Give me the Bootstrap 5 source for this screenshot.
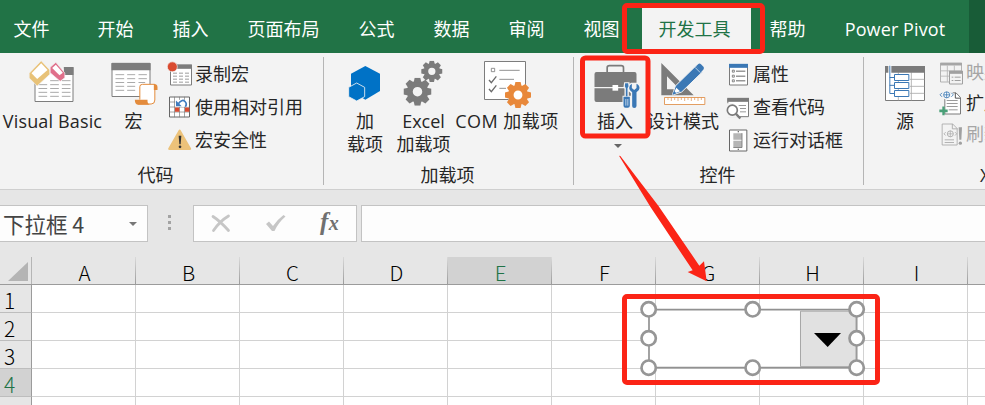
<!DOCTYPE html>
<html lang="zh-CN">
<head>
<meta charset="utf-8">
<meta name="viewport" content="width=device-width, initial-scale=1">
<title>Excel</title>
<link href="https://cdn.jsdelivr.net/npm/bootstrap@5.3.0/dist/css/bootstrap.min.css" rel="stylesheet">
<style>
body{width:985px;height:405px;overflow:hidden;background:#e6e6e6;font-family:"Open Sans","Noto Sans CJK SC",sans-serif;font-size:18px;line-height:23px;color:#262626}
.cjk{font-family:"Noto Sans CJK SC",sans-serif}
svg{overflow:visible;flex:none;display:block}
.tabs{height:53px;background:#217346;color:#fff;padding-top:8px}
.tabs .tab{height:45px;width:75px;padding:0 2px 2px 0;white-space:nowrap}
.tabs .tab-file{width:65px;margin-right:14px}
.tabs .tab-wide{width:111px}
.tabs .tab-on{width:109px;margin-left:2px;padding-right:4px;background:#f3f3f3;color:#217346}
.tabs .tab-pp{width:140px;letter-spacing:.1px}
.tabs .tab-end{width:16px;height:53px;margin:-8px 0 0 auto;background:#185c37}
.ribbon{height:137px;background:#f3f3f3;border-bottom:1px solid #cfcfcf;padding-top:4px}
.grp{height:128px;border-right:1px solid #b5b5b5;flex:none}
.grp-body{height:106px}
.grp-name{height:22px;white-space:nowrap;line-height:24px}
.g1{width:324px}.g2{width:250px}.g3{width:290px}.g4{width:160px;border:0}
.g1 .grp-name{padding-right:12px}
.g2 .grp-body{padding-left:13px}
.g2 .grp-name,.g3 .grp-name{padding-right:2px}
.g4 .grp-name{padding-left:116px}
.big{padding-top:3px;text-align:center;white-space:nowrap;flex:none}
.big svg{width:48px;height:48px;margin-bottom:2px}
.big .caret{width:8px;height:4px;margin:11px 0 0 5px}
.w105{width:105px}.w57{width:57px}.w56{width:56px}.w61{width:61px}.w106{width:106px}.w54{width:54px}.w82{width:82px}
.com-label{letter-spacing:.45px}
.vb-label{letter-spacing:.15px}
.tools{padding-top:1px}
.g1 .tools{margin-left:6px}
.g3 .tools{margin-left:17px}
.tool{height:33px;gap:2px;white-space:nowrap}
.g1 .tool{gap:3px}
.tool svg{width:24px;height:24px}
.g4 .tools{padding-top:0;margin-left:-7px}.g4 .tool{height:31px;gap:3px}
.off{color:#a6a6a6}
.fbar{height:37px;margin-top:15px}
.fbox{height:37px;background:#fdfdfd;border:1px solid #c3c3c3}
.namebox{width:148px;border-left:0;font-size:21.5px;padding:0 10px 0 3px;color:#444}
.grip{margin-left:20px}
.keys{width:164px;margin-left:22px}
.key-x{margin-left:18px}
.key-ok{margin-left:36px}
.fx{font:italic bold 25px/30px "Liberation Serif",serif;color:#707070;margin:0 0 3px 34px;letter-spacing:.5px}
.fx small{font-size:20px}
.entry{margin-left:4px}
.sheet{margin-top:15px;height:148px;font-family:"Noto Sans CJK SC",sans-serif;font-weight:300;font-size:20.5px;color:#000}
.hrow{height:28px;border-bottom:1px solid #9b9b9b}
.corner{width:32px;height:27px;border-right:1px solid #b5b5b5;padding:5px 3px 3px 8px}
.ch{width:104px;height:27px;flex:none;padding:3px 0 0 2px;border-right:1px solid;border-image:linear-gradient(#dcdcdc,#999) 1}
.sel{background:#d2d2d2;color:#217346}
.rh{width:32px;height:28px;padding:3px 0 0 4px;font-size:21px;border-right:1px solid #9b9b9b;border-bottom:1px solid #bdbdbd;flex:none}
.cell{width:104px;height:28px;flex:none;background:#fff;border-right:1px solid #d2d2d2;border-bottom:1px solid #d2d2d2}
.over{left:0;top:0;pointer-events:none}
</style>
<script src="https://cdn.jsdelivr.net/npm/bootstrap@5.3.0/dist/js/bootstrap.bundle.min.js"></script>
</head>
<body class="position-relative">
<svg width="0" height="0" class="position-absolute"><defs>
<g id="tooth"><path d="M-14-33-10-50H10L14-33Z"/></g>
<symbol id="gear" viewBox="-50 -50 100 100"><g fill="currentColor"><circle r="27.500" fill="none" stroke="currentColor" stroke-width="21"/><use href="#tooth"/><use href="#tooth" transform="rotate(45)"/><use href="#tooth" transform="rotate(90)"/><use href="#tooth" transform="rotate(135)"/><use href="#tooth" transform="rotate(180)"/><use href="#tooth" transform="rotate(225)"/><use href="#tooth" transform="rotate(270)"/><use href="#tooth" transform="rotate(315)"/></g></symbol>
</defs></svg>

<nav class="tabs d-flex">
<div class="tab tab-file d-flex align-items-center justify-content-center">文件</div>
<div class="tab d-flex align-items-center justify-content-center">开始</div>
<div class="tab d-flex align-items-center justify-content-center">插入</div>
<div class="tab tab-wide d-flex align-items-center justify-content-center">页面布局</div>
<div class="tab d-flex align-items-center justify-content-center">公式</div>
<div class="tab d-flex align-items-center justify-content-center">数据</div>
<div class="tab d-flex align-items-center justify-content-center">审阅</div>
<div class="tab d-flex align-items-center justify-content-center">视图</div>
<div class="tab tab-on d-flex align-items-center justify-content-center">开发工具</div>
<div class="tab d-flex align-items-center justify-content-center">帮助</div>
<div class="tab tab-pp d-flex align-items-center justify-content-center">Power Pivot</div>
<div class="tab-end"></div>
</nav>

<section class="ribbon d-flex overflow-hidden">
<div class="grp g1">
 <div class="grp-body d-flex">
  <div class="big w105 d-flex flex-column align-items-center">
   <svg viewBox="85.500 30 144 144"><path d="M103.500 68V154.500H217.500V52" fill="#fff" stroke="#7d7d7d" stroke-width="3"/><path d="M190 51h29v24h-29z" fill="#7d7d7d"/><path d="M114 104h26M149 104h26M184 104h26M114 115.500h26M149 115.500h26M184 115.500h26M114 127h26M149 127h26M184 127h26M114 139h26M149 139h26M184 139h26M149 92h26M184 92h26" stroke="#999" stroke-width="2.500"/><path d="M122 32 148 60V73L110 108 86 84V70Z" fill="#e8c278" stroke="#f3f3f3" stroke-width="2"/><path d="M122 40 141 60 110 87 93 70Z" fill="#fff"/><path d="M166 37 193 69V83L179 94 149 68V52Z" fill="#e0708b" stroke="#f3f3f3" stroke-width="2"/><path d="M166 44 187 68 177 76 155 54Z" fill="#fff"/></svg>
   <div class="vb-label">Visual Basic</div></div>
  <div class="big w57 d-flex flex-column align-items-center">
   <svg viewBox="328.500 30 144 144"><path d="M334.500 40V139.500H448.500V40Z" fill="#fff" stroke="#7d7d7d" stroke-width="3"/><path d="M333 39h117v22H333z" fill="#7d7d7d"/><path d="M345 74h26M380 74h24M414 74h25M345 86h26M380 86h24M414 86h25M345 97.500h26M380 97.500h24M414 97.500h20M345 109h26M380 109h24M345 121h26M380 121h24" stroke="#999" stroke-width="2.500"/><path d="M418 149V110Q418 103 426 103H463V150Q463 162 452 162H412" fill="#fff" stroke="#e38b3c" stroke-width="3"/><path d="M460 102Q471 102 471 112V120H460ZM403 149H441Q440 161 448 164H414Q403 164 403 149Z" fill="#e38b3c"/></svg>
   <div>宏</div></div>
  <div class="tools">
   <div class="tool d-flex align-items-center"><svg viewBox="24 37.500 72 72"><path d="M31.500 44H94.500V103.500H31.500Z" fill="#fff" stroke="#7d7d7d" stroke-width="3"/><path d="M50 42h46v13H50z" fill="#7d7d7d"/><path d="M39 68h12M57 68h12M75 68h12M39 77h12M57 77h12M75 77h12M39 86h12M57 86h12M75 86h12M39 95h12M57 95h12M75 95h12" stroke="#888" stroke-width="2.500"/><circle cx="37" cy="49" r="15" fill="#da4b30" stroke="#f3f3f3" stroke-width="2"/></svg><span>录制宏</span></div>
   <div class="tool d-flex align-items-center"><svg viewBox="24 136.500 72 72"><path d="M28.500 139.500H88.500V199.500H28.500Z" fill="#fff" stroke="#666" stroke-width="3"/><path d="M43.500 139V200M58.500 139V200M73.500 139V200M28 154.500H89M28 169.500H89M28 184.500H89" stroke="#777" stroke-width="2"/><path d="M45 171h13v13H45zM75 171h13v13H75z" fill="#da4b30"/><path d="M46 148H86V169H46Z" fill="#fff"/><path d="M54 161Q66 144 75 153 82 160 76 169" fill="none" stroke="#3f7cbf" stroke-width="5"/><path d="M48 150V167H65Z" fill="#3f7cbf"/></svg><span>使用相对引用</span></div>
   <div class="tool d-flex align-items-center"><svg viewBox="24 235.500 72 72"><path d="M59 241 90 295H28Z" fill="#ecc27a" stroke="#ecc27a" stroke-width="7" stroke-linejoin="round"/><path d="M56 256H64L62 281H58Z" fill="#333"/><circle cx="60" cy="289" r="4" fill="#333"/></svg><span>宏安全性</span></div>
  </div>
 </div>
 <div class="grp-name text-center">代码</div>
</div>

<div class="grp g2">
 <div class="grp-body d-flex">
  <div class="big w56 d-flex flex-column align-items-center">
   <svg viewBox="48 30 144 144"><path d="M121 48 165 71V123L121 149 78 123V71Z" fill="#0072c6"/><path d="M95 99 119 112V140L95 153 71 140V112Z" fill="#0072c6" stroke="#f3f3f3" stroke-width="2.500"/></svg>
   <div>加<br>载项</div></div>
  <div class="big w61 d-flex flex-column align-items-center">
   <svg viewBox="223.500 30 144 144" color="#7b7b7b"><use href="#gear" x="234" y="83" width="84" height="84"/><use href="#gear" x="287" y="32" width="64" height="64"/></svg>
   <div>Excel<br>加载项</div></div>
  <div class="big w106 d-flex flex-column align-items-center">
   <svg viewBox="474 30 144 144" color="#e8883a"><path d="M478.500 34.500H601.500V148.500H478.500Z" fill="#fff" stroke="#7d7d7d" stroke-width="3"/><path d="M499 55h10v10h-10zM523 61h61M523 88h44M523 115h20" fill="none" stroke="#7d7d7d" stroke-width="2.500"/><path d="M492 90 499 98 514 79M492 117 499 125 514 106" fill="none" stroke="#6b6b6b" stroke-width="4"/><circle cx="579" cy="135" r="31" fill="#fff"/><use href="#gear" x="540" y="96" width="78" height="78"/></svg>
   <div class="com-label">COM 加载项</div></div>
 </div>
 <div class="grp-name text-center">加载项</div>
</div>

<div class="grp g3">
 <div class="grp-body d-flex">
  <div class="big w82 d-flex flex-column align-items-center">
   <svg viewBox="61.500 30 144 144"><path d="M110 66V53Q110 47 117 47H152Q159 47 159 53V66" fill="none" stroke="#7b7b7b" stroke-width="5"/><path d="M78 66H192Q198 66 198 72V111H72V72Q72 66 78 66ZM72 115H198V156H78Q72 156 72 150Z" fill="#7b7b7b"/><path d="M126 105h17v17h-17z" fill="#fff"/><path d="M161 97H177L178 110 175 117V137H182V176H156V137H162V117L159 110ZM181 98H210V122L202 130V176H181V130L173 122V106Z" fill="#f3f3f3"/><path d="M164 100H173L174 109 171 115V139H166V115L163 109ZM159 140H178V167Q178 173 172 173H165Q159 173 159 167Z" fill="#3b78b5"/><path d="M166 147v20M172 147v20" stroke="#fff" stroke-width="2"/><path d="M184 101V114L191 120 198 114V101Q207 105 207 114 207 122 198 127V168Q198 174 191 174 185 174 185 168V127Q176 122 176 114 176 105 184 101Z" fill="#3b78b5"/></svg>
   <div>插入</div>
   <svg class="caret" viewBox="0 0 8 4"><path d="M0 0H8L4 4Z" fill="#666"/></svg></div>
  <div class="big w54 d-flex flex-column align-items-center">
   <svg viewBox="267 30 144 144"><path d="M274 39 371 136H274ZM291 79V118H329Z" fill="#7b7b7b" fill-rule="evenodd"/><path d="M307 135 316 108 378 47 397 66 335 126Z" fill="#3b78b5" stroke="#f3f3f3" stroke-width="3"/><path d="M378 49 385 42Q389 39 393 43L401 51Q403 55 400 59L393 66Z" fill="#3b78b5"/><path d="M375 52 391 68" stroke="#fff" stroke-width="2"/><path d="M319 113 330 124 310 132Z" fill="#fff"/><path d="M307 135 312 122 319 130Z" fill="#3b78b5"/><path d="M283.500 142.500H404.500V163.500H283.500Z" fill="#fff" stroke="#df8b43" stroke-width="2.500"/><path d="M294 143v7M304 143v10M314 143v7M324 143v10M334 143v7M344 143v10M354 143v7M364 143v10M374 143v7M384 143v10M394 143v7" stroke="#df8b43" stroke-width="2"/></svg>
   <div>设计模式</div></div>
  <div class="tools">
   <div class="tool d-flex align-items-center"><svg viewBox="21 37.500 72 72"><path d="M28.500 42H82.500V103.500H28.500Z" fill="#fff" stroke="#7b7b7b" stroke-width="3"/><path d="M27 40h57v12H27z" fill="#3b78b5"/><path d="M48 62h28M48 77h28M48 91h28" stroke="#666" stroke-width="3"/><path d="M37 59h6v6h-6zM37 74h6v6h-6zM37 88h6v6h-6z" fill="#fff" stroke="#555" stroke-width="2"/></svg><span>属性</span></div>
   <div class="tool d-flex align-items-center"><svg viewBox="21 136.500 72 72"><path d="M23.500 144H85.500V198.500H23.500Z" fill="#fff" stroke="#7b7b7b" stroke-width="3"/><path d="M22 142h65v12H22z" fill="#7b7b7b"/><path d="M56 165h22M60 174h18M60 184h18" stroke="#999" stroke-width="3"/><path d="M18 158H40L55 202H18Z" fill="#f3f3f3"/><circle cx="37" cy="179" r="15" fill="#fff" stroke="#7b7b7b" stroke-width="5"/><path d="M48 190 61 204" stroke="#7b7b7b" stroke-width="7"/></svg><span>查看代码</span></div>
   <div class="tool d-flex align-items-center"><svg viewBox="21 235.500 72 72"><path d="M28.500 238.500H80.500V301.500H28.500Z" fill="#fff" stroke="#666" stroke-width="3"/><path d="M40 248h26v20H40zM40 271h26v20H40z" fill="#b5b5b5"/><path d="M66 248V291H40" fill="none" stroke="#777" stroke-width="2.500"/><path d="M53 242h4v3h-4zM53 295h4v3h-4z" fill="#444"/></svg><span>运行对话框</span></div>
  </div>
 </div>
 <div class="grp-name text-center">控件</div>
</div>

<div class="grp g4">
 <div class="grp-body d-flex">
  <div class="big w82 d-flex flex-column align-items-center">
   <svg viewBox="483 30 144 144"><path d="M496.500 50H613.500V151.500H496.500Z" fill="#fff" stroke="#7b7b7b" stroke-width="3"/><path d="M570 88H613M570 109H613M570 130H613M535 67V151M574 67V151" stroke="#aaa" stroke-width="2.500"/><path d="M495 48h120v20H495z" fill="#7b7b7b"/><path d="M505 45h9v30h-9z" fill="#fff"/><path d="M509.500 47V130.500H524M509 82.500H524M509 106H524" fill="none" stroke="#3b78b5" stroke-width="3"/><path d="M523.500 73.500H566.500V91.500H523.500ZM523.500 97.500H566.500V115.500H523.500ZM523.500 121.500H566.500V139.500H523.500Z" fill="#fff" stroke="#3b78b5" stroke-width="3"/></svg>
   <div>源</div></div>
  <div class="tools">
   <div class="tool off d-flex align-items-center"><svg viewBox="657 31.500 72 72"><path d="M661.500 38H724.500V94.500H661.500Z" fill="#f3f3f3" stroke="#a6a6a6" stroke-width="2.500"/><path d="M661 37h65v8h-65z" fill="#a6a6a6"/><path d="M661 61h64M661 77h64M682 45v49M703 45v49" stroke="#b5b5b5" stroke-width="2.500"/><path d="M688.500 62.500H727.500V100.500H688.500Z" fill="#f3f3f3" stroke="#a0a0a0" stroke-width="3"/><path d="M687 61h42v9h-42z" fill="#a0a0a0"/><path d="M695 80h5M704 80h18M695 90h5M704 90h18" stroke="#a0a0a0" stroke-width="3"/></svg><span>映射属性</span></div>
   <div class="tool d-flex align-items-center"><svg viewBox="657 124.500 72 72"><path d="M674.500 140V190.500H721.500V141L708 127H698" fill="#fff" stroke="#7b7b7b" stroke-width="3"/><path d="M706 127V143H721" fill="none" stroke="#555" stroke-width="3"/><path d="M680 150h33M680 159h33M680 168h33M686 178h27" stroke="#888" stroke-width="2.500"/><circle cx="680" cy="133" r="14" fill="#f3f3f3"/><path d="M666 127 660 133 666 139M694 127 700 133 694 139" fill="none" stroke="#3b78b5" stroke-width="2.500"/><circle cx="680" cy="133" r="9" fill="#fff" stroke="#3b78b5" stroke-width="2.500"/><path d="M671 133H689M680 124V142" stroke="#3b78b5" stroke-width="2.500"/><path d="M667 168h7v9h9v8h-9v9h-7v-9h-9v-8h9z" fill="#4aa078"/></svg><span>扩展包</span></div>
   <div class="tool off d-flex align-items-center"><svg viewBox="657 217.500 72 72"><path d="M666.500 220.500H698L711.500 234V283.500H666.500Z" fill="#f3f3f3" stroke="#a6a6a6" stroke-width="2.500"/><path d="M697 220V235H712" fill="none" stroke="#a6a6a6" stroke-width="2.500"/><path d="M677 245 672 250 677 255M705 245 710 250 705 255M674 268h28M674 276h28" fill="none" stroke="#a6a6a6" stroke-width="2.500"/><circle cx="691" cy="250" r="9" fill="none" stroke="#a6a6a6" stroke-width="2.500"/><path d="M682 250H700M691 241V259" stroke="#a6a6a6" stroke-width="2"/><path d="M716 230H726L724 268H718Z" fill="#a0a0a0"/><circle cx="721" cy="278" r="5" fill="#a0a0a0"/></svg><span>刷新数据</span></div>
  </div>
 </div>
 <div class="grp-name">XML</div>
</div>
</section>

<section class="fbar d-flex">
 <div class="fbox namebox cjk d-flex align-items-center justify-content-between"><span>下拉框 4</span><svg width="8" height="4" viewBox="0 0 8 4"><path d="M0 0H8L4 4Z" fill="#777"/></svg></div>
 <svg class="grip" width="3" height="37" viewBox="0 0 3 37"><path d="M0 10h3v3H0zM0 16h3v3H0zM0 22h3v3H0z" fill="#a3a3a3"/></svg>
 <div class="fbox keys d-flex align-items-center">
  <svg class="key-x" width="18" height="17" viewBox="0 0 18 17"><path d="M1 1.500Q8 6 16.500 15.500M16.500 1Q8 6 1.500 15.500" fill="none" stroke="#c6c6c6" stroke-width="2.800" stroke-linecap="round"/></svg>
  <svg class="key-ok" width="20" height="17" viewBox="0 0 20 17"><path d="M0 9 3 6.500 7 11Q12 4 17.500 0L19.500 1.500Q12 8 8.500 16H6Z" fill="#c6c6c6"/></svg>
  <span class="fx">f<small>x</small></span>
 </div>
 <div class="fbox entry flex-fill border-end-0"></div>
</section>

<section class="sheet overflow-hidden" id="sheet">
 <div class="hrow d-flex" id="cols"><div class="corner flex-shrink-0"><svg width="20" height="19" viewBox="0 0 20 19"><path d="M0 19H20V0Z" fill="#b4b4b4"/></svg></div></div>
</section>

<svg class="over position-absolute" width="985" height="405" viewBox="0 0 985 405">
 <g transform="translate(610 140) scale(.33333)">
  <path d="M117 509H740V683H117Z" fill="#fff" stroke="#919191" stroke-width="5"/>
  <path d="M571.500 513.500H738V680H571.500Z" fill="#e1e1e1" stroke="#a6a6a6" stroke-width="3"/>
  <path d="M612 579H693L653 621Z" fill="#000"/>
  <g fill="#fff" stroke="#969696" stroke-width="8"><circle cx="116" cy="508" r="21.500"/><circle cx="428" cy="508" r="21.500"/><circle cx="740" cy="508" r="21.500"/><circle cx="116" cy="595" r="21.500"/><circle cx="740" cy="595" r="21.500"/><circle cx="116" cy="683" r="21.500"/><circle cx="428" cy="683" r="21.500"/><circle cx="740" cy="683" r="21.500"/></g>
  <path d="M27 47 31 48 145 197 268 377 282 364 290 424 233 396 248 391 122 202Z" fill="#fb2416"/>
 </g>
 <g fill="none" stroke="#fb2416" stroke-width="5"><rect x="624.500" y="5.500" width="138" height="46" rx="2.500"/><rect x="582.500" y="58" width="65.500" height="78" rx="3"/><rect x="624.500" y="296.500" width="253" height="86" rx="2.500"/></g>
</svg>
<script>
const cols = document.getElementById('cols'), sheet = document.getElementById('sheet');
[...'ABCDEFGHIJ'].forEach(c => cols.insertAdjacentHTML('beforeend', `<div class="ch d-flex align-items-center justify-content-center ${c === 'E' ? 'sel' : ''}">${c === 'J' ? '' : c}</div>`));
for (let r = 1; r <= 5; r++)
  sheet.insertAdjacentHTML('beforeend', `<div class="d-flex"><div class="rh d-flex align-items-center ${r === 4 ? 'sel' : ''}">${r < 5 ? r : ''}</div>${'<div class="cell"></div>'.repeat(10)}</div>`);
</script>
</body>
</html>
